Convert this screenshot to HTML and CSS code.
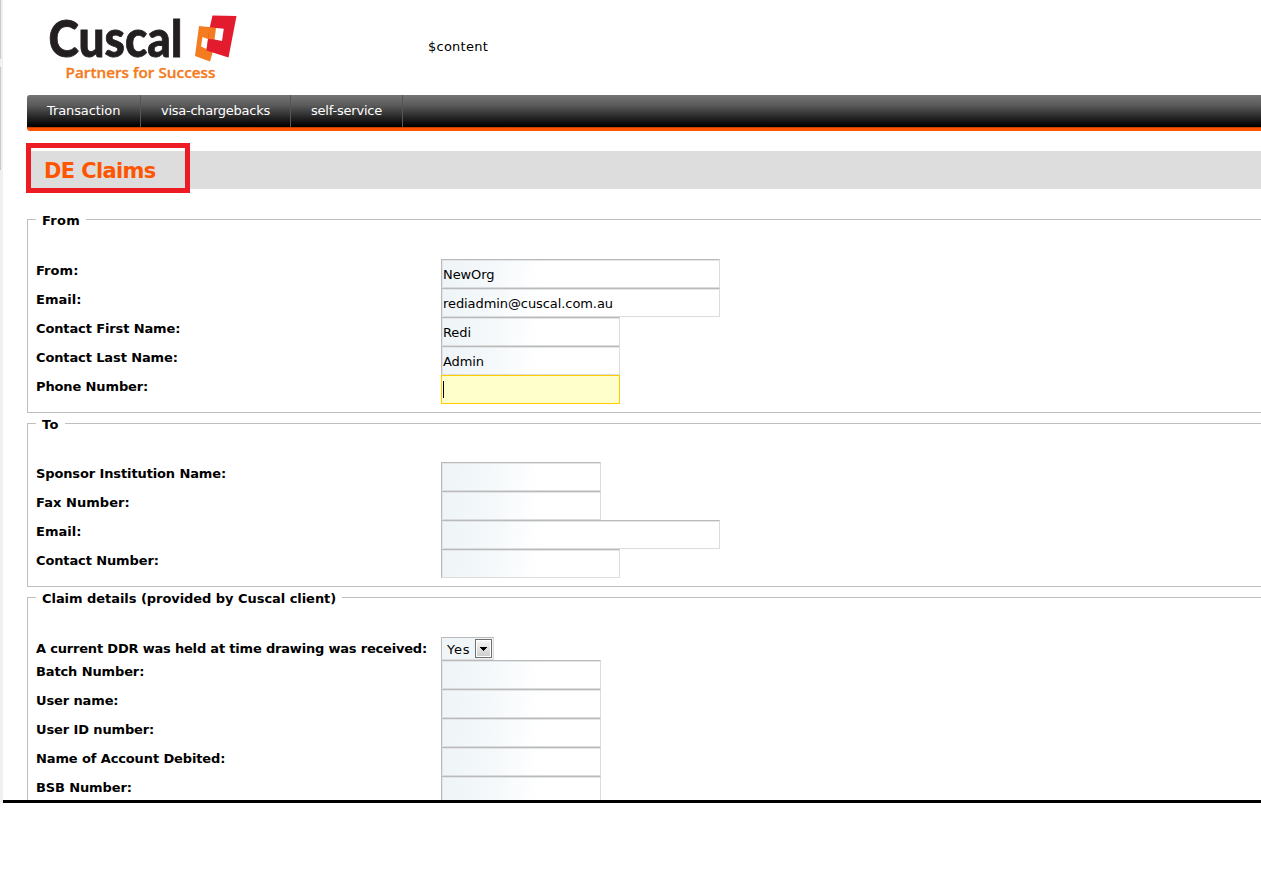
FILE: index.html
```html
<!DOCTYPE html>
<html lang="en">
<head>
<meta charset="utf-8">
<title>DE Claims</title>
<link rel="stylesheet" href="styles.css">
</head>
<body>
<div class="window">
  <div class="gutter"><i class="thumb thumb-a"></i><i class="thumb thumb-b"></i></div>
  <main class="page">
    <header class="header">
      <svg class="logo" width="212" height="95" viewBox="0 0 212 95">
        <text class="logo-name" x="21.500" y="56.500" textLength="134" lengthAdjust="spacingAndGlyphs">Cuscal</text>
        <text class="logo-tag" x="38.500" y="78" textLength="150" lengthAdjust="spacingAndGlyphs">Partners for Success</text>
        <path fill="#f47b20" fill-rule="evenodd" d="M172 26 L196 28.500 L194 38 L189 41 L183 61.500 L168 56 Z M175.500 37 L181 39 L179.500 49 L174 46.500 Z"/>
        <path fill="#e31b2e" d="M185.500 15.500 L209.500 16 L201.500 57.500 L179.500 50.500 L181 39 L182.500 28.500 Z"/>
        <path fill="#f47b20" d="M182.300 27 L189.500 28 L188 39.500 L181 39 Z"/>
        <path fill="#fff" d="M189 28 L196.800 28.800 L195 41 L187.500 39.500 Z"/>
      </svg>
      <p class="content-slot">$content</p>
    </header>
    <nav class="nav">
      <a class="nav-item nav-transaction"><span>Transaction</span></a>
      <a class="nav-item nav-visa"><span>visa-chargebacks</span></a>
      <a class="nav-item nav-self"><span>self-service</span></a>
    </nav>
    <div class="title-bar"><h1 class="title">DE Claims</h1></div>
    <form class="form">
      <fieldset class="group">
        <legend class="short">From</legend>
        <div class="row"><label class="short">From:</label><div class="field wide">NewOrg</div></div>
        <div class="row"><label class="short">Email:</label><div class="field wide">rediadmin@cuscal.com.au</div></div>
        <div class="row"><label>Contact First Name:</label><div class="field medium">Redi</div></div>
        <div class="row"><label>Contact Last Name:</label><div class="field medium">Admin</div></div>
        <div class="row"><label>Phone Number:</label><div class="field medium focused"><i class="caret"></i></div></div>
      </fieldset>
      <fieldset class="group group-to">
        <legend class="short">To</legend>
        <div class="row"><label>Sponsor Institution Name:</label><div class="field"></div></div>
        <div class="row"><label class="short">Fax Number:</label><div class="field"></div></div>
        <div class="row"><label class="short">Email:</label><div class="field wide"></div></div>
        <div class="row"><label>Contact Number:</label><div class="field medium"></div></div>
      </fieldset>
      <fieldset class="group">
        <legend>Claim details (provided by Cuscal client)</legend>
        <div class="row row-select"><label>A current DDR was held at time drawing was received:</label>
          <div class="select"><span>Yes</span><svg class="arrow" width="17" height="19" viewBox="0 0 17 19"><defs><linearGradient id="btn" x2="0" y2="1"><stop stop-color="#f4f4f4"/><stop offset="1" stop-color="#cfcfcf"/></linearGradient></defs><rect x=".5" y=".5" width="16" height="18" fill="#fff" stroke="#707070"/><rect x="2" y="2" width="13" height="15" fill="url(#btn)"/><path d="M5 8h7v1h-1v1h-1v1H9v1H8v-1H7v-1H6V9H5z"/></svg></div></div>
        <div class="row"><label>Batch Number:</label><div class="field"></div></div>
        <div class="row"><label>User name:</label><div class="field"></div></div>
        <div class="row"><label>User ID number:</label><div class="field"></div></div>
        <div class="row"><label>Name of Account Debited:</label><div class="field"></div></div>
        <div class="row"><label>BSB Number:</label><div class="field"></div></div>
      </fieldset>
    </form>
  </main>
</div>
</body>
</html>
```
FILE: styles.css
```css
* { box-sizing: border-box; }
body { margin: 0; background: #fff; color: #000; font: 13px Verdana, "DejaVu Sans", sans-serif; overflow: hidden; }
.window { display: flex; height: 803px; overflow: hidden; }
.gutter { width: 3px; flex: none; background: #f0f0f0; display: flex; flex-direction: column; gap: 8px; }
.thumb { width: 1px; background: #c8c8c8; }
.thumb-a { height: 59px; }
.thumb-b { height: 103px; }
.page { flex: 1; min-width: 0; height: 803px; padding-left: 24px; border-bottom: 3px solid #000; overflow: hidden; }
.header { display: flex; height: 95px; }
.logo { display: block; flex: none; }
.logo-name { font: 900 52px Lato, sans-serif; fill: #231f20; stroke: #231f20; stroke-width: .8px; }
.logo-tag { font: 600 14px "Open Sans", sans-serif; fill: #f47b20; stroke: #f47b20; stroke-width: .3px; }
.content-slot { margin: 37px 0 0 189px; line-height: 20px; letter-spacing: .25px; }
.nav { display: flex; height: 36px; border-bottom: 3px solid #ff5500; border-radius: 3px 0 0 3px; background: linear-gradient(#747474, #5c5c5c 30%, #000 94%); color: #fff; box-shadow: inset 0 -1px #c84300; }
.nav-item { height: 32px; padding-left: 20px; line-height: 31px; border-right: 1px solid #555; white-space: nowrap; }
.nav-transaction { width: 114px; letter-spacing: -.1px; }
.nav-visa { width: 150px; letter-spacing: -.26px; }
.nav-self { width: 112px; letter-spacing: -.2px; }
.title-bar { height: 38px; margin-top: 20px; background: #ddd; }
.title { width: 164px; height: 50px; margin: 0; padding-left: 13px; border: 5px solid #ed1c24; position: relative; left: -1px; top: -8px; font-size: 21px; line-height: 46px; letter-spacing: -.65px; color: #ff5500; white-space: nowrap; }
.form { margin-top: 22px; }
.group { margin: 0 -10px 2px 0; padding: 31px 0 8px 8px; border: 1px solid #bfbfbf; min-width: 0; }
.group-to { padding-top: 30px; }
legend { height: 17px; padding: 0 6px; line-height: 19px; font-weight: bold; letter-spacing: -.05px; white-space: nowrap; }
.row { display: flex; height: 29px; }
.row label { width: 405px; flex: none; line-height: 23px; font-weight: bold; letter-spacing: -.12px; white-space: nowrap; }
legend.short { letter-spacing: .3px; }
.row label.short { letter-spacing: .05px; }
.row.row-select label { letter-spacing: -.19px; }
.field { width: 160px; height: 29px; padding-left: 1px; line-height: 29px; letter-spacing: -.08px; border: 1px solid #dcdcdc; border-top-color: #bababa; border-left-color: #bababa; background: linear-gradient(100deg, #eef4f7, #f4f8fa 45px, #fff 100px); box-shadow: inset 1px 1px #e3e6e8; white-space: nowrap; }
.medium { width: 179px; }
.wide { width: 279px; }
.focused { padding: 5px 0 0 1px; border-color: #fc0; background: #ffffcb; box-shadow: none; }
.caret { display: block; width: 1px; height: 17px; background: #000; }
.row-select { height: 23px; }
.select { display: flex; width: 53px; height: 23px; padding: 1px 1px 0 5px; border: 1px solid #dcdcdc; border-top-color: #bababa; border-left-color: #bababa; background: #f0f5f8; line-height: 22px; letter-spacing: .8px; }
.select span { width: 28px; }
.arrow { display: block; flex: none; }
```
